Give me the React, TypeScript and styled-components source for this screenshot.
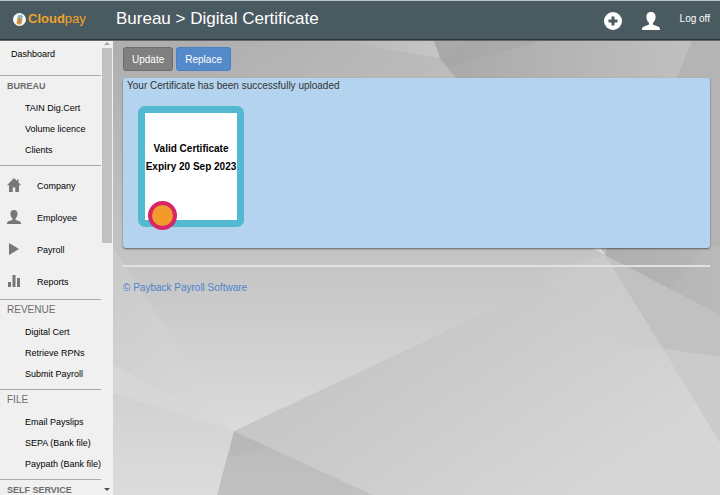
import React from "react";
import styled, { createGlobalStyle, css } from "styled-components";

const GlobalStyle = createGlobalStyle`
  * { box-sizing: border-box; }
  html, body, #root { height: 100%; }
  body {
    margin: 0;
    font-family: "Liberation Sans", Arial, sans-serif;
    font-size: 10px;
    color: #333;
  }
  a { color: inherit; text-decoration: none; }
  button { font-family: inherit; }
`;

const Page = styled.div`
  display: flex;
  flex-direction: column;
  height: 100vh;
  overflow: hidden;
`;

const Header = styled.header`
  display: flex;
  align-items: center;
  flex: none;
  height: 41px;
  padding: 0 10px 3px 13px;
  background: #4a5a61;
  border-top: 1px solid #b9c5c8;
  border-bottom: 1px solid #64666a;
  box-shadow: inset 0 -1px 0 #26343b;
`;

const Brand = styled.a`
  display: flex;
  align-items: center;
  gap: 2px;
  width: 103px;
  font-size: 13px;
  line-height: 16px;
  color: #f0a328;
`;

const Title = styled.h1`
  flex: 1;
  margin: 0;
  font-size: 17px;
  line-height: 20px;
  font-weight: 400;
  color: #fff;
  white-space: nowrap;
`;

const HeaderActions = styled.div`
  display: flex;
  align-items: center;
  gap: 20px;
  font-size: 10px;
  line-height: 12px;
  color: #fff;
`;

const IconButton = styled.button`
  display: flex;
  padding: 3px 0 0;
  border: 0;
  background: none;
  color: #fff;
`;

const Body = styled.div`
  display: flex;
  flex: 1;
  min-height: 0;
`;

const Sidebar = styled.aside`
  display: flex;
  flex: none;
  width: 113px;
  background: #f0f0f0;
`;

const Menu = styled.nav`
  flex: 1;
  overflow: hidden;
  font-size: 9px;
  color: #000;
`;

const Scrollbar = styled.div`
  display: flex;
  flex-direction: column;
  align-items: center;
  justify-content: space-between;
  width: 12px;
  padding-bottom: 4px;
`;

const ScrollTop = styled.div`
  display: flex;
  flex-direction: column;
  align-items: center;
  gap: 3px;
  padding-top: 1px;
`;

const Thumb = styled.div`
  width: 10px;
  height: 195px;
  background: #c1c1c1;
`;

const Arrow = styled.span<{ $down?: boolean }>`
  border: 3px solid transparent;
  ${(p) =>
    p.$down
      ? css`border-top-color: #505050; border-bottom-width: 0;`
      : css`border-bottom-color: #a3a3a3; border-top-width: 0;`}
`;

const DashboardLink = styled.a`
  display: block;
  height: 34px;
  padding: 7px 0 0 11px;
  line-height: 12px;
`;

const Section = styled.section`
  padding-bottom: 4px;
  border-top: 1px solid #a9a9a9;
`;

const SectionTitle = styled.h2<{ $bold?: boolean }>`
  margin: 0;
  padding: 5px 0 6px 7px;
  font-size: ${(p) => (p.$bold ? 9 : 10)}px;
  line-height: 10px;
  font-weight: ${(p) => (p.$bold ? 700 : 400)};
  color: #6c6c6c;
`;

const MenuLink = styled.a`
  display: block;
  padding-left: 25px;
  line-height: 21px;
  white-space: nowrap;
`;

const SectionLinks = styled.div`
  padding-top: 1px;
`;

const IconSection = styled.section`
  padding: 4px 0 1px;
  border-top: 1px solid #a9a9a9;
`;

const IconLink = styled.a`
  display: flex;
  align-items: center;
  gap: 16px;
  height: 32px;
  padding-left: 7px;

  svg {
    flex: none;
    margin-bottom: 3px;
    color: #777;
  }
`;

const Main = styled.main`
  position: relative;
  flex: 1;
  min-width: 0;
  padding: 6px 10px 0;
  overflow: hidden;
  background: #c6c6c6;
`;

const Backdrop = styled.svg`
  position: absolute;
  inset: 0;
  width: 100%;
  height: 100%;
`;

const Content = styled.div`
  position: relative;
`;

const Toolbar = styled.div`
  display: flex;
  gap: 3px;
  margin-bottom: 7px;
`;

const ActionButton = styled.button<{ $primary?: boolean }>`
  height: 24px;
  padding: 0 8px;
  border: 1px solid ${(p) => (p.$primary ? "#4b80c3" : "#6d6d6d")};
  border-radius: 3px;
  background: ${(p) => (p.$primary ? "#558aca" : "#808080")};
  color: #fff;
  font-size: 10px;
`;

const Panel = styled.section`
  min-height: 170px;
  padding: 1px 4px 21px;
  border-radius: 3px;
  background: #b3d3ef;
  box-shadow: 0 1px 2px rgba(0, 0, 0, 0.5);
`;

const Message = styled.p`
  margin: 0 0 14px;
  font-size: 10px;
  line-height: 13px;
`;

const Certificate = styled.div`
  position: relative;
  display: flex;
  flex-direction: column;
  justify-content: center;
  width: 106px;
  height: 121px;
  margin-left: 11px;
  padding-bottom: 17px;
  border: 7px solid #52b9d1;
  border-radius: 7px;
  background: #fff;
  color: #000;
  font-size: 10px;
  line-height: 18px;
  font-weight: 700;
  text-align: center;
  white-space: nowrap;
`;

const Seal = styled.span`
  position: absolute;
  left: 3px;
  bottom: -10px;
  width: 29px;
  height: 29px;
  border: 4px solid #d92567;
  border-radius: 50%;
  background: #f29a2c;
`;

const Footer = styled.footer`
  margin-top: 17px;
  padding-top: 14px;
  border-top: 2px solid #e2e2e2;
  font-size: 10px;
  line-height: 13px;
  color: #4e83c9;
`;

const BrandMark = () => (
  <svg width="13" height="13" viewBox="0 0 26 26" aria-hidden="true">
    <circle cx="13" cy="13" r="13" fill="#f7fafb" />
    <path d="M9 9 19 11 17 22Q12 25 7 21Z" fill="#d2964a" />
    <path d="m10 11 4 2-2 7" fill="none" stroke="#b9813b" strokeWidth="2" />
    <path d="m9 7 2-4 3 2 4-2 2 5-3 3-7-1Z" fill="#8fb3c6" />
  </svg>
);

const PlusIcon = () => (
  <svg width="18" height="18" viewBox="0 0 18 18" aria-hidden="true">
    <circle cx="9" cy="9" r="9" fill="currentColor" />
    <path d="M9 4.5v9M4.5 9h9" stroke="#4a5a61" strokeWidth="3" />
  </svg>
);

const UserIcon = ({ size }: { size: number }) => (
  <svg width={size} height={size} viewBox="0 0 18 18" aria-hidden="true">
    <path
      fill="currentColor"
      d="M9 0C6 0 4.400 2 4.400 4.800c0 2.600 1 4.700 2.600 6v1.600C6 13.400 1.600 14 .6 15.400 0 16 0 17 0 18h18c0-1 0-2-.6-2.600C16.400 14 12 13.400 11 12.400v-1.600c1.600-1.300 2.600-3.400 2.600-6C13.600 2 12 0 9 0Z"
    />
  </svg>
);

const HomeIcon = () => (
  <svg width="14" height="14" viewBox="0 0 14 14" aria-hidden="true">
    <path
      fill="currentColor"
      d="M7 0 0 7.200h2V14h3.700V9.500h2.600V14H12V7.200h2L11.500 4.600V1.500H10v1.600Z"
    />
  </svg>
);

const PlayIcon = () => (
  <svg width="14" height="14" viewBox="0 0 14 14" aria-hidden="true">
    <path fill="currentColor" d="M2 1 12 7 2 13Z" />
  </svg>
);

const BarsIcon = () => (
  <svg width="14" height="14" viewBox="0 0 14 14" aria-hidden="true">
    <path fill="currentColor" d="M1 8h3v5H1ZM5.500 1h3V13h-3ZM10 4h3v9h-3Z" />
  </svg>
);

const PolygonBackdrop = () => (
  <Backdrop viewBox="113 41 607 454" preserveAspectRatio="xMidYMid slice" aria-hidden="true">
    <defs>
      <linearGradient id="base" gradientUnits="userSpaceOnUse" x1="0" y1="41" x2="0" y2="431">
        <stop offset="0" stopColor="#aeaeae" />
        <stop offset="0.55" stopColor="#c4c4c4" />
        <stop offset="1" stopColor="#dbdbdb" />
      </linearGradient>
      <linearGradient id="plain" gradientUnits="userSpaceOnUse" x1="450" y1="270" x2="600" y2="500">
        <stop offset="0" stopColor="#c5c5c5" />
        <stop offset="1" stopColor="#d7d7d7" />
      </linearGradient>
      <linearGradient id="fade" gradientUnits="userSpaceOnUse" x1="340" y1="0" x2="439" y2="0">
        <stop offset="0" stopColor="#b8b8b8" />
        <stop offset="1" stopColor="#c5c5c5" />
      </linearGradient>
      <linearGradient id="ridge" gradientUnits="userSpaceOnUse" x1="200" y1="0" x2="450" y2="0">
        <stop offset="0" stopColor="#bcbcbc" stopOpacity="0" />
        <stop offset="1" stopColor="#bcbcbc" />
      </linearGradient>
      <linearGradient id="top" gradientUnits="userSpaceOnUse" x1="439" y1="0" x2="690" y2="0">
        <stop offset="0" stopColor="#a9a9a9" />
        <stop offset="1" stopColor="#c0c0c0" />
      </linearGradient>
      <linearGradient id="east" gradientUnits="userSpaceOnUse" x1="607" y1="0" x2="720" y2="0">
        <stop offset="0" stopColor="#b0b0b0" />
        <stop offset="1" stopColor="#bababa" />
      </linearGradient>
      <linearGradient id="west" gradientUnits="userSpaceOnUse" x1="113" y1="280" x2="220" y2="425">
        <stop offset="0" stopColor="#cbcbcb" />
        <stop offset="1" stopColor="#d9d9d9" />
      </linearGradient>
      <linearGradient id="corner" gradientUnits="userSpaceOnUse" x1="0" y1="400" x2="0" y2="495">
        <stop offset="0" stopColor="#d2d2d2" />
        <stop offset="1" stopColor="#dcdcdc" />
      </linearGradient>
      <linearGradient id="shade" gradientUnits="userSpaceOnUse" x1="0" y1="431" x2="0" y2="495">
        <stop offset="0" stopColor="#bababa" />
        <stop offset="1" stopColor="#c1c1c1" />
      </linearGradient>
    </defs>
    <path fill="url(#base)" d="M113 41h607v454H113Z" />
    <path fill="url(#ridge)" d="M200 41H439V58L456 78H200Z" />
    <path fill="url(#fade)" d="M340 41H434L440 58Z" />
    <path fill="url(#top)" d="M434 41H692L677 78H456L440 58Z" />
    <path fill="#a5a5a5" d="M440 58 465 41H540L452 66Z" opacity="0.5" />
    <path fill="#b4b4b4" d="M692 41h28V254L607 248 650 145Z" />
    <path fill="url(#west)" d="M113 248 202 383 234 431 113 365Z" />
    <path fill="#d7d7d7" d="M113 365 234 431 113 393Z" />
    <path fill="url(#corner)" d="M113 393 234 431 217 495H113Z" />
    <path fill="url(#plain)" d="M234 431 541 287 605 255 720 443v52H373Z" />
    <path fill="url(#shade)" d="M234 431 373 495H217Z" />
    <path fill="#b5b5b5" d="M234 431 270 448 228 458Z" opacity="0.4" />
    <path fill="#c1c1c1" d="M605 255 720 315V357L663 349Z" />
    <path fill="#cbcbcb" d="M663 349 720 357V443Z" />
    <path fill="url(#east)" d="M607 246h113v69L605 255Z" />
    <path fill="#acacac" d="M607 250 703 252 669 288 605 255Z" opacity="0.3" />
    <path fill="#cbcbcb" d="M605 255 663 349 617 343 541 272Z" opacity="0.5" />
    <path fill="#dcdcdc" d="M589 246h10l6 9Z" />
  </Backdrop>
);

const lowerSections: { title: string; bold?: boolean; links: string[] }[] = [
  { title: "REVENUE", links: ["Digital Cert", "Retrieve RPNs", "Submit Payroll"] },
  { title: "FILE", links: ["Email Payslips", "SEPA (Bank file)", "Paypath (Bank file)"] },
  { title: "SELF SERVICE", bold: true, links: [] },
];

const MenuSection = ({ title, bold, links }: { title: string; bold?: boolean; links: string[] }) => (
  <Section>
    <SectionTitle $bold={bold}>{title}</SectionTitle>
    <SectionLinks>
      {links.map((label) => (
        <MenuLink href="#" key={label}>{label}</MenuLink>
      ))}
    </SectionLinks>
  </Section>
);

export default function App() {
  return (
    <Page>
      <GlobalStyle />
      <Header>
        <Brand href="#">
          <BrandMark />
          <span><b>Cloud</b>pay</span>
        </Brand>
        <Title>Bureau &gt; Digital Certificate</Title>
        <HeaderActions>
          <IconButton type="button" aria-label="Add"><PlusIcon /></IconButton>
          <IconButton type="button" aria-label="Account"><UserIcon size={18} /></IconButton>
          <a href="#">Log off</a>
        </HeaderActions>
      </Header>
      <Body>
        <Sidebar>
          <Menu>
            <DashboardLink href="#">Dashboard</DashboardLink>
            <MenuSection title="BUREAU" bold links={["TAIN Dig.Cert", "Volume licence", "Clients"]} />
            <IconSection>
              <IconLink href="#"><HomeIcon />Company</IconLink>
              <IconLink href="#"><UserIcon size={14} />Employee</IconLink>
              <IconLink href="#"><PlayIcon />Payroll</IconLink>
              <IconLink href="#"><BarsIcon />Reports</IconLink>
            </IconSection>
            {lowerSections.map((s) => (
              <MenuSection key={s.title} {...s} />
            ))}
          </Menu>
          <Scrollbar aria-hidden="true">
            <ScrollTop>
              <Arrow />
              <Thumb />
            </ScrollTop>
            <Arrow $down />
          </Scrollbar>
        </Sidebar>
        <Main>
          <PolygonBackdrop />
          <Content>
            <Toolbar>
              <ActionButton type="button">Update</ActionButton>
              <ActionButton type="button" $primary>Replace</ActionButton>
            </Toolbar>
            <Panel>
              <Message>Your Certificate has been successfully uploaded</Message>
              <Certificate>
                <span>Valid Certificate</span>
                <span>Expiry 20 Sep 2023</span>
                <Seal />
              </Certificate>
            </Panel>
            <Footer><a href="#">© Payback Payroll Software</a></Footer>
          </Content>
        </Main>
      </Body>
    </Page>
  );
}
